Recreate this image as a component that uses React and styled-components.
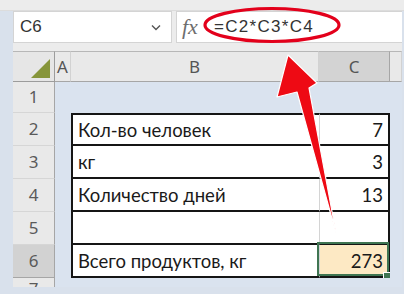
import React from 'react';
import styled, { createGlobalStyle } from 'styled-components';

const GlobalStyle = createGlobalStyle`
  html, body {
    margin: 0;
    padding: 0;
  }
  body {
    background: #d9e1ec;
    font-family: "Liberation Sans", Arial, sans-serif;
  }
`;

const Frame = styled.div`
  position: relative;
  width: 404px;
  height: 294px;
  overflow: hidden;
  background: #d9e1ec;
  display: flex;
  flex-direction: column;
`;

const TopStrip = styled.div`
  height: 10px;
  background: #ececec;
  border-bottom: 1px solid #dcdcdc;
`;

const Body = styled.div`
  margin: 0 2px 0 13px;
  display: flex;
  flex-direction: column;
`;

const FormulaBar = styled.div`
  display: flex;
  gap: 4px;
  height: 40px;
  padding-bottom: 8px;
  box-sizing: border-box;
  background: #ececec;
`;

const NameBox = styled.div`
  width: 159px;
  background: #fff;
  border: 1px solid #d4d4d4;
  box-sizing: border-box;
  display: flex;
  align-items: center;
  justify-content: space-between;
  padding: 0 10px 0 6px;
  font-size: 17px;
  color: #333;
`;

const Chevron = styled.svg`
  width: 10px;
  height: 7px;
`;

const InputBox = styled.div`
  flex: 1;
  background: #fff;
  border: 1px solid #d4d4d4;
  border-right: none;
  box-sizing: border-box;
  display: flex;
  align-items: center;
`;

const Fx = styled.span`
  width: 37px;
  padding-left: 5px;
  box-sizing: border-box;
  font-family: "Liberation Serif", "Times New Roman", serif;
  font-style: italic;
  font-size: 22px;
  color: #6e6e6e;
`;

const Formula = styled.span`
  font-size: 17px;
  letter-spacing: 1.3px;
  color: #333;
`;

const Row = styled.div`
  display: grid;
  grid-template-columns: 42px 16px 248px 71px 1fr;
  height: ${p => p.$h}px;
  box-sizing: border-box;
  overflow: ${p => (p.$open ? 'visible' : 'hidden')};
`;

const Corner = styled.div`
  background: #e6e6e6;
  border-top: 1px solid #b7b7b7;
  border-right: 1px solid #9c9c9c;
  border-bottom: 1px solid #9c9c9c;
  box-sizing: border-box;
  display: flex;
  align-items: flex-end;
  justify-content: flex-end;
  padding: 0 4px 3px 0;
`;

const ColHead = styled.div`
  background: ${p => (p.$active ? '#d3d3d3' : '#e9e9e9')};
  border-top: 1px solid #b7b7b7;
  border-right: 1px solid ${p => (p.$active ? '#a6a6a6' : '#d2d2d2')};
  border-bottom: 1px solid #a6a6a6;
  box-sizing: border-box;
  display: flex;
  align-items: center;
  justify-content: center;
  font-family: "Noto Sans", sans-serif;
  font-size: 17px;
  color: #555;
`;

const RowHead = styled.div`
  background: ${p => (p.$active ? '#d2d2d2' : '#e9e9e9')};
  border-right: 1px solid #a6a6a6;
  border-bottom: 1px solid ${p => (p.$active ? '#a6a6a6' : '#d6d6d6')};
  box-sizing: border-box;
  display: flex;
  align-items: ${p => (p.$clipped ? 'flex-start' : 'center')};
  justify-content: center;
  padding-top: ${p => (p.$clipped ? '1px' : '0')};
  font-family: "Noto Sans", sans-serif;
  font-size: 17px;
  line-height: 20px;
  color: #5a5a5a;
`;

const Cell = styled.div`
  position: relative;
  box-sizing: border-box;
  display: flex;
  align-items: center;
  justify-content: ${p => (p.$num ? 'flex-end' : 'flex-start')};
  padding: 0 5px;
  font-family: Lato, "Open Sans", sans-serif;
  font-size: 18.5px;
  color: #1a1a1a;
  background: ${p => (p.$table ? (p.$sel ? '#fde9c4' : '#fff') : '#dae3ef')};
  ${p => p.$table && `border-bottom: 2px solid #151515;`}
  ${p => p.$first && `border-top: 2px solid #151515;`}
  ${p => p.$table && !p.$num && `border-left: 2px solid #151515;`}
  ${p => p.$table && p.$num && `border-right: 2px solid #151515; border-left: 1px solid #d4d4d4;`}
`;

const Selection = styled.div`
  position: absolute;
  top: -3px;
  left: -3px;
  right: -1px;
  bottom: 0;
  border: 2px solid #3f7552;
`;

const FillHandle = styled.div`
  position: absolute;
  right: -4px;
  bottom: -5px;
  width: 7px;
  height: 7px;
  background: #3f7552;
  border: 1px solid #fff;
`;

const Overlay = styled.svg`
  position: absolute;
  left: 0;
  top: 0;
  pointer-events: none;
`;

const rows = [
  { n: 1, h: 31 },
  { n: 2, h: 33, label: 'Кол-во человек', value: '7' },
  { n: 3, h: 33, label: 'кг', value: '3' },
  { n: 4, h: 33, label: 'Количество дней', value: '13' },
  { n: 5, h: 33, label: '', value: '' },
  { n: 6, h: 33, label: 'Всего продуктов, кг', value: '273', sel: true },
  { n: 7, h: 9, clipped: true },
];

export default function App() {
  return (
    <Frame>
      <GlobalStyle />
      <TopStrip />
      <Body>
        <FormulaBar>
          <NameBox>
            C6
            <Chevron viewBox="0 0 10 7">
              <path d="M1 1.5 L5 5.5 L9 1.5" fill="none" stroke="#555" strokeWidth="1.4" />
            </Chevron>
          </NameBox>
          <InputBox>
            <Fx>fx</Fx>
            <Formula>=C2*C3*C4</Formula>
          </InputBox>
        </FormulaBar>
        <Row $h={31}>
          <Corner>
            <svg width="19" height="19" viewBox="0 0 19 19">
              <path d="M19 0 L19 19 L0 19 Z" fill="#86953a" />
            </svg>
          </Corner>
          <ColHead>A</ColHead>
          <ColHead>B</ColHead>
          <ColHead $active>C</ColHead>
          <ColHead />
        </Row>
        {rows.map(r => {
          const table = r.label !== undefined;
          return (
            <Row key={r.n} $h={r.h} $open={r.sel}>
              <RowHead $active={r.sel} $clipped={r.clipped}>{r.n}</RowHead>
              <Cell />
              <Cell $table={table} $first={r.n === 2}>{r.label}</Cell>
              <Cell $table={table} $first={r.n === 2} $num $sel={r.sel}>
                {r.value}
                {r.sel && (
                  <>
                    <Selection />
                    <FillHandle />
                  </>
                )}
              </Cell>
              <Cell />
            </Row>
          );
        })}
      </Body>
      <Overlay width="404" height="294" viewBox="0 0 404 294">
        <ellipse cx="272" cy="25" rx="67" ry="16.5" fill="none" stroke="#e3001b" strokeWidth="3.2" />
        <polygon
          points="288,55 317,83 309,88 336,233 297,92 277,97"
          fill="#ee0a14"
          stroke="#ffffff"
          strokeWidth="1.2"
          strokeLinejoin="round"
        />
      </Overlay>
    </Frame>
  );
}
